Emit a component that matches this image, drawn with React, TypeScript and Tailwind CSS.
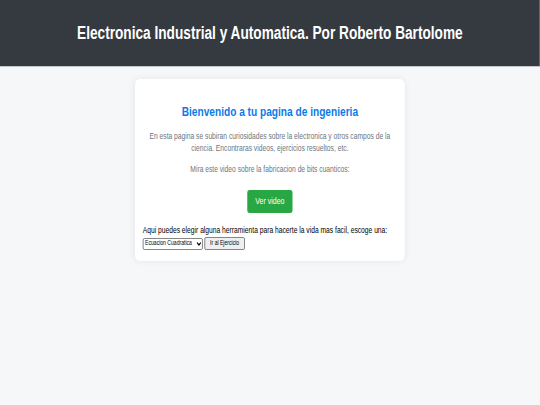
import React from 'react';
import { ChevronDown } from 'lucide-react';

// The reference is rendered narrow: lay out at 692px and squeeze horizontally to 540px.
const font = { fontFamily: '"Liberation Sans", Arial, Helvetica, sans-serif' };

const App: React.FC = () => {
  return (
    <div className="min-h-screen bg-[#f6f7f9] overflow-hidden" style={font}>
      <div className="w-[692px] origin-top-left scale-x-[0.78]">
        <header className="h-[67px] bg-[#343a40] border-b border-[#c4c8cc] flex items-center justify-center">
          <h1 className="text-white font-bold text-[17.5px]">
            Electronica Industrial y Automatica. Por Roberto Bartolome
          </h1>
        </header>

        <main className="pt-[12px]">
          <div className="w-[346px] mx-auto bg-white rounded-md shadow-[0_0_8px_rgba(0,0,0,0.07)] px-[10px] pt-[24px] pb-[11px]">
            <h2 className="text-center text-[#0b7be9] font-bold text-[13px] leading-[18px]">
              Bienvenido a tu pagina de ingenieria
            </h2>
            <p className="mt-[9px] px-[6px] text-center text-[#6c757d] text-[8.6px] leading-[12px]">
              En esta pagina se subiran curiosidades sobre la electronica y otros campos de la ciencia. Encontraras videos, ejercicios resueltos, etc.
            </p>
            <p className="mt-[9px] text-center text-[#6c757d] text-[8.6px] leading-[12px]">
              Mira este video sobre la fabricacion de bits cuanticos:
            </p>
            <div className="mt-[15px] flex justify-center">
              <button className="w-[58px] h-[23px] rounded-[3px] bg-[#28a745] text-white text-[9px]">
                Ver video
              </button>
            </div>
            <p className="mt-[11px] text-black text-[8.6px] leading-[12px]">
              Aqui puedes elegir alguna herramienta para hacerte la vida mas facil, escoge una:
            </p>
            <div className="mt-[1px] flex items-center gap-[2px]">
              <div className="relative">
                <select className="block appearance-none w-[77px] h-[12px] text-[6.5px] border border-[#767676] rounded-[2px] bg-white pl-[2px] pr-[8px] py-0 leading-none">
                  <option>Ecuacion Cuadratica</option>
                </select>
                <ChevronDown className="absolute right-[1px] top-[2px] w-[8px] h-[8px] text-black pointer-events-none" strokeWidth={4} />
              </div>
              <button className="w-[52px] h-[13px] text-[6.5px] border border-[#767676] rounded-[2px] bg-[#efefef] leading-none">
                Ir al Ejercicio
              </button>
            </div>
          </div>
        </main>
      </div>
    </div>
  );
};

export default App;
